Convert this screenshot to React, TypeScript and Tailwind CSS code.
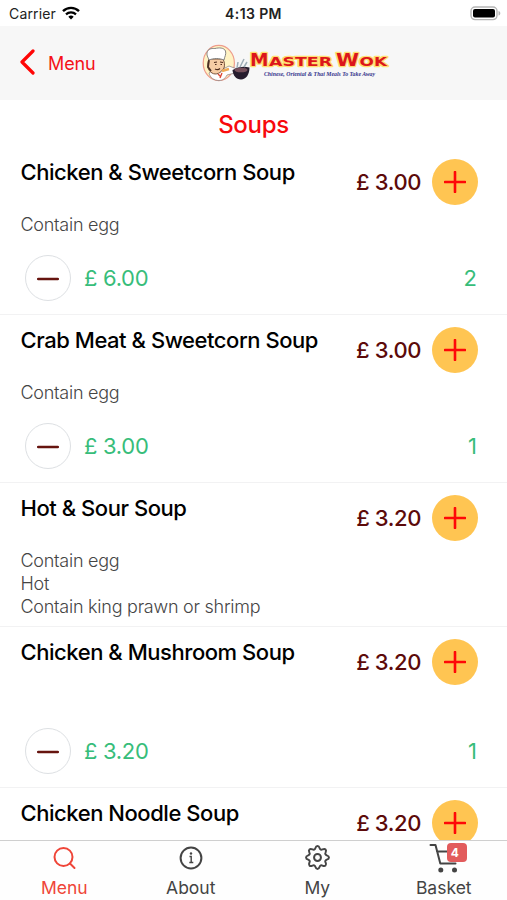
import { clsx } from "clsx";

interface SoupItem {
  name: string;
  price: string;
  notes: string[];
  subtotal?: string;
  quantity?: number;
}

const soups: SoupItem[] = [
  { name: "Chicken & Sweetcorn Soup", price: "3.00", notes: ["Contain egg"], subtotal: "6.00", quantity: 2 },
  { name: "Crab Meat & Sweetcorn Soup", price: "3.00", notes: ["Contain egg"], subtotal: "3.00", quantity: 1 },
  { name: "Hot & Sour Soup", price: "3.20", notes: ["Contain egg", "Hot", "Contain king prawn or shrimp"] },
  { name: "Chicken & Mushroom Soup", price: "3.20", notes: [], subtotal: "3.20", quantity: 1 },
  { name: "Chicken Noodle Soup", price: "3.20", notes: [] },
];

function StatusBar() {
  return (
    <div className="grid h-[26px] shrink-0 grid-cols-3 items-center bg-white pl-[9px] pr-[6px] text-[14px] text-[#222]">
      <div className="flex items-center gap-[6px]">
        <span className="tracking-[0.15px]">Carrier</span>
        <svg className="h-[14px] w-[18px]" viewBox="0 0 18 14">
          <path d="M1 5.2a11.4 11.4 0 0 1 16 0" fill="none" stroke="#000" strokeWidth="2.4" />
          <path d="M4 8.4a7.2 7.2 0 0 1 10 0" fill="none" stroke="#000" strokeWidth="2.2" />
          <path d="M6.3 10.8a4 4 0 0 1 5.4 0L9 13.6Z" fill="#000" />
        </svg>
      </div>
      <span className="-ml-[3px] text-center font-semibold tracking-[0.4px]">4:13 PM</span>
      <svg className="h-[15px] w-[31px] justify-self-end" viewBox="0 0 31 15">
        <rect x="1" y="1" width="26" height="12.6" rx="4" fill="#fff" stroke="#b5b5b5" strokeWidth="1.4" />
        <rect x="3" y="3" width="22" height="8.6" rx="2" fill="#000" />
        <path d="M28.5 5v4.6c1.2-.4 1.8-1.2 1.8-2.3S29.7 5.4 28.5 5Z" fill="#b5b5b5" />
      </svg>
    </div>
  );
}

function Logo() {
  return (
    <svg className="h-[46px] w-[190px]" viewBox="0 0 190 46">
      {/* Chef */}
      <ellipse cx="18.8" cy="23" rx="15.6" ry="17.6" fill="#fff3c4" stroke="#ee9d8c" strokeWidth="1.2" />
      <path d="M9 33c3-3 8-3 12-3l8-4 8 3-2 4-8 2c-2 4-5 5.5-8 5.5-5 0-9-3-10-7.500Z" fill="#fff" stroke="#857a78" strokeWidth=".7" />
      <path d="M9 19c-2 5-2 11 3 14 4 2.500 9 0 12-5 1-3 .5-6-1-9Z" fill="#f6cda5" stroke="#6b4630" strokeWidth=".9" />
      <path d="M9 20 8 27l3 4" fill="none" stroke="#4a3024" strokeWidth="1.8" />
      <path d="M9 20c-1-3-3-5-1.500-8.500C9 8 13 8.500 15 8.500c4-1 9-1 10.500 2.500 1 3-1 6-1.500 9-5-2-10-2-15 0Z" fill="#fff" stroke="#777" strokeWidth=".9" />
      <path d="M14 22.500l3-.5M20 22l3 .5M15 24.500h1.500M20.500 24.500H22M15 29q3 1.500 5-.5" fill="none" stroke="#4d2b1c" strokeWidth="1.1" />
      <path d="M22 31l7-2" stroke="#efaa54" strokeWidth="2.4" />
      <path d="M18 34l3 3M22 33l-2 5" stroke="#dd4631" strokeWidth="1.300" />
      {/* Wok */}
      <path d="M32.500 30q8-5 17-2.500c0 7-3.500 12-8.500 12s-8-4-8.500-9.500Z" fill="#271d2e" />
      <ellipse cx="41" cy="30" rx="6.500" ry="2.300" fill="#76505c" />
      <path d="M37 28l1-6M40 27l4-8M44 27l3-5" stroke="#9faeb7" strokeWidth="1.500" />
      <g
        fontFamily="DejaVu Sans, sans-serif"
        fontWeight="700"
        fill="#dc161b"
        stroke="#ffdf70"
        strokeWidth="2.600"
        paintOrder="stroke"
        strokeLinejoin="round"
      >
        <text x="50" y="25.500" fontSize="17" textLength="18.500" lengthAdjust="spacingAndGlyphs">M</text>
        <text x="69" y="25.500" fontSize="13" textLength="63" lengthAdjust="spacingAndGlyphs">ASTER</text>
        <text x="136" y="25.500" fontSize="18.500" textLength="23" lengthAdjust="spacingAndGlyphs">W</text>
        <text x="159.500" y="25.500" fontSize="13" textLength="27.500" lengthAdjust="spacingAndGlyphs">OK</text>
      </g>
      <text
        x="64"
        y="35.500"
        fontFamily="Liberation Serif, serif"
        fontSize="6.500"
        fontStyle="italic"
        fontWeight="700"
        fill="#33338c"
        textLength="111"
        lengthAdjust="spacingAndGlyphs"
      >
        Chinese, Oriental &amp; Thai Meals To Take Away
      </text>
    </svg>
  );
}

function Header() {
  return (
    <header className="grid h-[74px] shrink-0 grid-cols-[200px_1fr] items-center bg-[#f7f7f7] pl-5">
      <button className="flex items-center gap-[13px] text-[18px] text-[#f51218]">
        <svg className="-mt-[3px] h-[26px] w-[15px]" viewBox="0 0 15 26">
          <path d="M13 2L2 13l11 11" fill="none" stroke="#ff0505" strokeWidth="3.2" strokeLinecap="round" strokeLinejoin="round" />
        </svg>
        <span className="tracking-[-0.1px]">Menu</span>
      </button>
      <div className="-ml-5">
        <Logo />
      </div>
    </header>
  );
}

function SoupRow({ item }: { item: SoupItem }) {
  return (
    <li className="shrink-0 border-b border-[#f2f2f3] pl-[20.5px] pr-[29px]">
      <div className="flex h-[66px] justify-between">
        <h2 className="pt-[10px] text-[22px] font-medium leading-[30px] tracking-[-0.45px] text-black">{item.name}</h2>
        <div className="flex items-start gap-[11px] pt-[12px]">
          <span className="text-[22px] font-medium leading-[46px] tracking-[-0.4px] text-[#5c0a0a]">£ {item.price}</span>
          <button className="flex size-[46px] items-center justify-center rounded-full bg-[#ffc552]">
            <svg className="size-[22px]" viewBox="0 0 22 22">
              <path d="M11 1v20M1 11h20" stroke="#ff0808" strokeWidth="2.6" strokeLinecap="round" />
            </svg>
          </button>
        </div>
      </div>
      <div className="min-h-4 text-[18px] font-light leading-[23px] tracking-[-0.25px] text-[#454545]">
        {item.notes.map((note) => (
          <p key={note}>{note}</p>
        ))}
      </div>
      {item.quantity ? (
        <div className="mb-[13px] mt-[19px] flex h-[46px] items-center pl-[4.5px] text-[22px] text-[#37bd7a]">
          <button className="flex size-[46px] items-center justify-center rounded-full border border-[#dde0e3]">
            <svg className="size-[22px]" viewBox="0 0 22 22">
              <path d="M1.2 12h19.600" stroke="#66140f" strokeWidth="2.6" strokeLinecap="round" />
            </svg>
          </button>
          <span className="ml-[13px] tracking-[-0.3px]">£ {item.subtotal}</span>
          <span className="ml-auto mr-px">{item.quantity}</span>
        </div>
      ) : (
        <div className="h-[8px]" />
      )}
    </li>
  );
}

function SearchIcon() {
  return (
    <svg className="size-6" viewBox="0 0 24 24" fill="none" stroke="currentColor" strokeWidth="2" strokeLinecap="round">
      <circle cx="11.5" cy="11" r="9" />
      <path d="M18 17.500l4.500 4.500" />
    </svg>
  );
}

function InfoIcon() {
  return (
    <svg className="size-6" viewBox="0 0 24 24" fill="none" stroke="currentColor" strokeWidth="2">
      <circle cx="12" cy="12" r="10.400" />
      <path d="M10.500 10.500h1.700v6M10.300 16.500h4" strokeWidth="1.400" />
      <circle cx="12" cy="7.500" r="1.200" fill="currentColor" stroke="none" />
    </svg>
  );
}

function GearIcon() {
  return (
    <svg className="size-[25px]" viewBox="0 0 24 24" fill="none" stroke="currentColor" strokeWidth="1.9" strokeLinejoin="round">
      <path d="M12 1c1.500 0 1.800 1.200 2.100 2.200.4 1.300 1.500 1.700 2.600 1.100 1-.5 2-1.100 3 0s.5 2 0 3c-.6 1.100-.2 2.200 1.100 2.600 1 .3 2.200.6 2.200 2.100s-1.200 1.800-2.200 2.100c-1.300.4-1.700 1.500-1.100 2.600.5 1 1.100 2 0 3s-2 .5-3 0c-1.100-.6-2.200-.2-2.600 1.100-.3 1-.6 2.200-2.100 2.200s-1.800-1.200-2.100-2.200c-.4-1.300-1.500-1.700-2.600-1.100-1 .5-2 1.100-3 0s-.5-2 0-3c.6-1.100.2-2.200-1.100-2.600-1-.3-2.200-.6-2.200-2.100s1.200-1.800 2.200-2.100c1.300-.4 1.700-1.500 1.100-2.600-.5-1-1.100-2 0-3s2-.5 3 0c1.100.6 2.200.2 2.600-1.100.3-1 .6-2.200 2.100-2.200Z" />
      <circle cx="12" cy="12" r="3.300" />
    </svg>
  );
}

function CartIcon() {
  return (
    <svg className="h-[30px] w-[30px]" viewBox="0 0 30 30" fill="none" stroke="currentColor" strokeWidth="2" strokeLinecap="round" strokeLinejoin="round">
      <path d="M1.500 2h5l4.800 18.500h15.200M8 8.500h20l-2.500 8.500" />
      <circle cx="11.800" cy="27" r="2.500" fill="currentColor" stroke="none" />
      <circle cx="25.500" cy="27" r="2.500" fill="currentColor" stroke="none" />
    </svg>
  );
}

const tabs = [
  { label: "Menu", icon: <SearchIcon />, active: true },
  { label: "About", icon: <InfoIcon /> },
  { label: "My", icon: <GearIcon /> },
  { label: "Basket", icon: <CartIcon />, badge: 4 },
];

function TabBar() {
  return (
    <nav className="grid h-[60px] shrink-0 grid-cols-4 border-t border-[#cfcfcf] bg-[#fefefe] pl-px">
      {tabs.map((tab) => (
        <button
          key={tab.label}
          className={clsx("flex flex-col items-center text-[17.5px]", tab.active ? "text-[#ef4538]" : "text-[#444]")}
        >
          <span className="relative flex h-[33px] items-center justify-center">
            {tab.icon}
            {tab.badge && (
              <span className="absolute left-[18px] top-[2px] flex h-[19px] w-5 items-center justify-center rounded-[4px] bg-[#e25b5c] pr-1 text-[12px] font-bold text-white">
                {tab.badge}
              </span>
            )}
          </span>
          <span className="leading-[27px]">{tab.label}</span>
        </button>
      ))}
    </nav>
  );
}

export default function App() {
  return (
    <div className="flex h-[900px] w-[507px] flex-col overflow-hidden bg-white font-[Inter,sans-serif]">
      <StatusBar />
      <Header />
      <main className="min-h-0 flex-1 overflow-hidden">
        <h1 className="h-[47px] text-center text-[24px] font-medium leading-[50px] tracking-[-0.3px] text-[#f7090d]">Soups</h1>
        <ul className="flex flex-col">
          {soups.map((item) => (
            <SoupRow key={item.name} item={item} />
          ))}
        </ul>
      </main>
      <TabBar />
    </div>
  );
}
